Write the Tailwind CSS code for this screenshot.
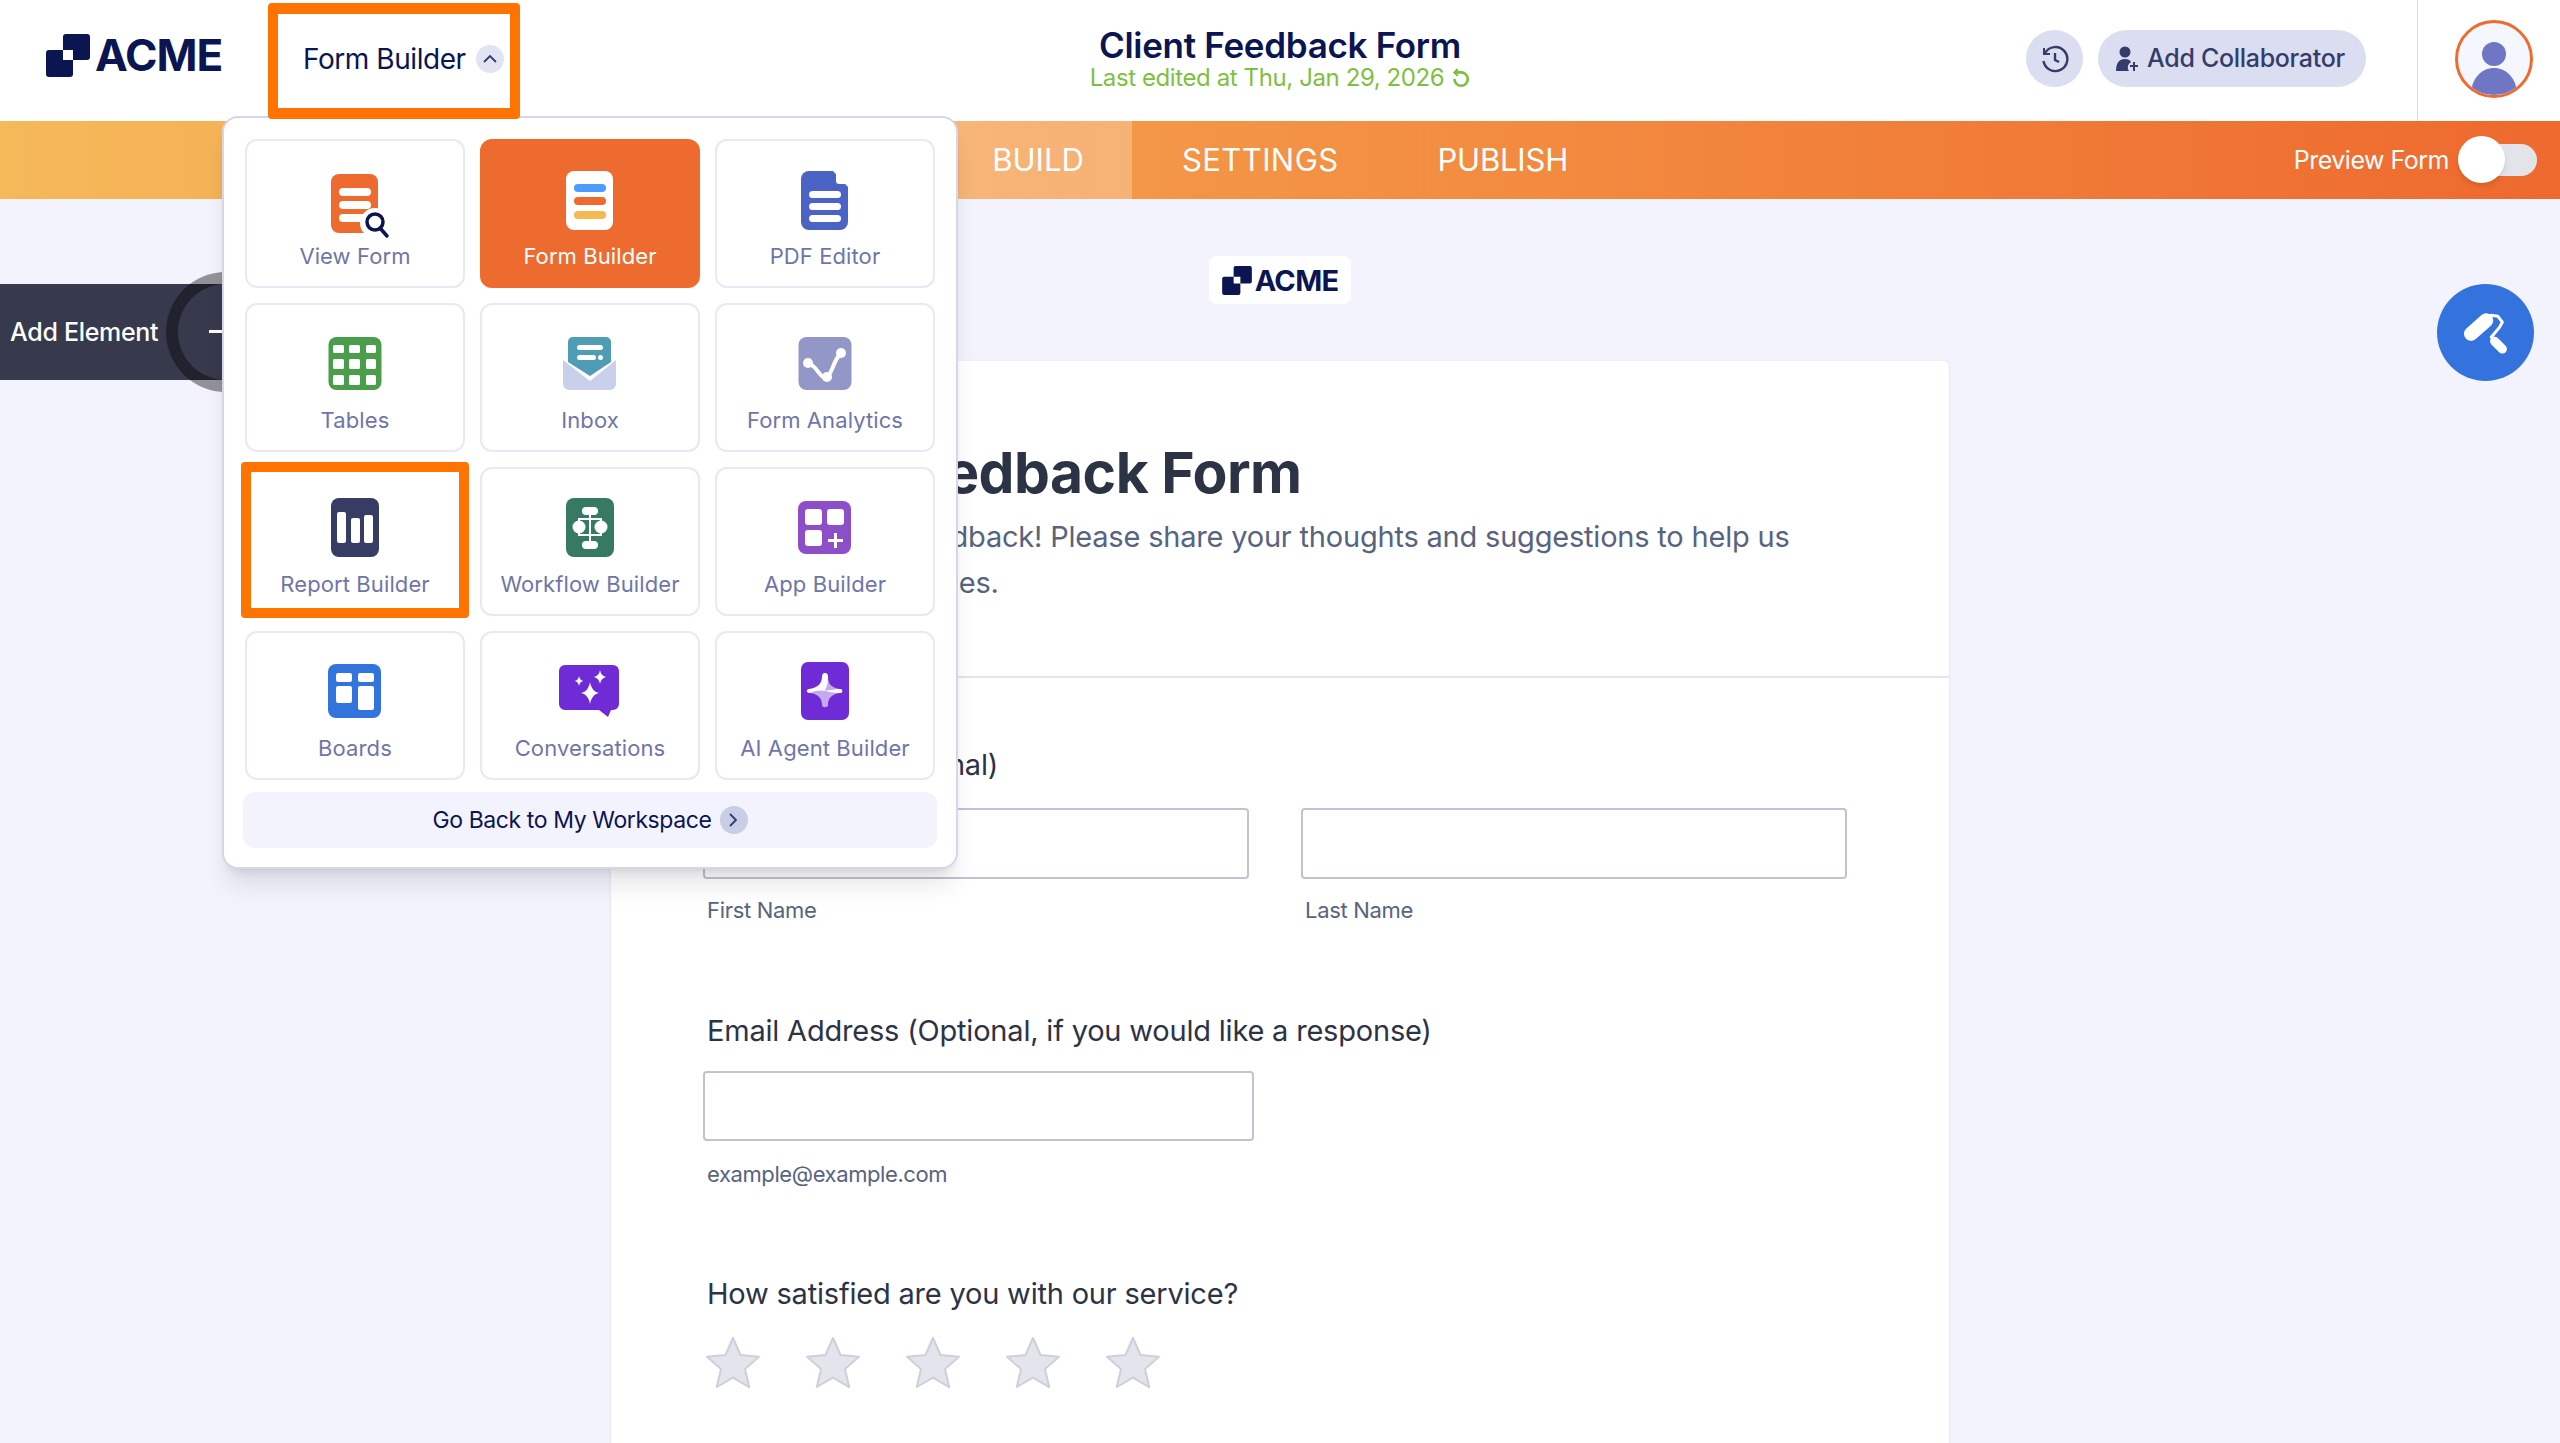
<!DOCTYPE html>
<html lang="en">
<head>
    <meta charset="UTF-8">
    <meta name="viewport" content="width=device-width, initial-scale=1.0">
    <title>Client Feedback Form</title>
    <script src="https://cdn.jsdelivr.net/npm/@tailwindcss/browser@4"></script>
</head>
<body class="relative h-[1443px] overflow-hidden bg-[#F3F3FE] font-['Inter',sans-serif] text-[#0A1551]">

    <!-- Top header -->
    <header class="grid h-[121px] grid-cols-[1fr_auto_1fr] items-center bg-white">
        <div class="flex items-center pl-[46px]">
            <div class="flex w-[222px] items-center gap-[5px] pb-[11px]">
                <svg width="44" height="43" viewBox="0 0 44 43" fill="#0A1551">
                    <path d="M20 0h21a3 3 0 0 1 3 3v20a3 3 0 0 1-3 3H27V16H17V3a3 3 0 0 1 3-3z"/>
                    <path d="M3 16h14v10h10v14a3 3 0 0 1-3 3H3a3 3 0 0 1-3-3V19a3 3 0 0 1 3-3z"/>
                </svg>
                <span class="text-[44px] leading-none font-bold tracking-[-1px]">ACME</span>
            </div>
            <div class="ml-[35px] flex items-center gap-[10px] pb-[4px]">
                <span class="text-[28px] tracking-[-0.45px]">Form Builder</span>
                <span class="flex h-[28px] w-[28px] items-center justify-center rounded-full bg-[#E3E4F3]">
                    <svg width="14" height="9" viewBox="0 0 14 9" fill="none" stroke="#343C6A" stroke-width="1.8"><path d="M1 8l6-6 6 6"/></svg>
                </span>
            </div>
        </div>
        <div class="pb-[5px] text-center">
            <div class="text-[35px] leading-[40px] font-semibold tracking-[-0.3px]">Client Feedback Form</div>
            <div class="flex items-center justify-center gap-[6px] text-[24px] leading-[26px] tracking-[-0.4px] text-[#7FBF3F]">
                Last edited at Thu, Jan 29, 2026
                <svg width="20" height="20" viewBox="0 0 18 18" fill="none" stroke="#7FBF3F" stroke-width="2.4"><path d="M5 4h5a6 6 0 1 1-6 6"/><path d="M7 1L4 4l3 3" stroke-width="2"/></svg>
            </div>
        </div>
        <div class="flex h-full items-center justify-end">
            <span class="mb-[4px] flex h-[57px] w-[57px] items-center justify-center rounded-full bg-[#DBDDF0]">
                <svg width="28" height="28" viewBox="0 0 28 28" fill="none" stroke="#343C6A" stroke-width="2.4"><path d="M4 8a12 12 0 1 1-1.500 8"/><path d="M3 3v6h6" stroke-width="2"/><path d="M14 8v7l4 2"/></svg>
            </span>
            <span class="mb-[4px] ml-[15px] flex h-[57px] w-[268px] items-center gap-[8px] rounded-full bg-[#DBDDF0] pl-[17px]">
                <svg width="24" height="26" viewBox="0 0 24 26" fill="#343C6A"><circle cx="10" cy="6" r="5.500"/><path d="M1 25c0-8 3-12 9-12 3 0 5 1 6 3a6 6 0 0 0-2 9z"/><path d="M18 16h2v3h3v2h-3v4h-2v-4h-3v-2h3z"/></svg>
                <span class="text-[25px] font-medium tracking-[-0.3px] text-[#343C6A]">Add Collaborator</span>
            </span>
            <div class="ml-[51px] h-full w-px bg-[#DADCEC]"></div>
            <div class="mr-[27px] mb-[4px] ml-[37px] h-[78px] w-[78px] overflow-hidden rounded-full border-[3px] border-[#EE6B2F] bg-[#F5F7FE]">
                <svg width="72" height="72" viewBox="0 0 72 72" fill="#6F76C4"><circle cx="36" cy="31" r="12"/><path d="M13 72C13 55 24 45 36 45S59 55 59 72z"/></svg>
            </div>
        </div>
    </header>

    <!-- Orange tab bar -->
    <nav class="flex h-[78px] items-center bg-gradient-to-r from-[#F5B95A] to-[#EE692E] pr-[23px] pl-[950px] text-white">
        <div class="flex h-full w-[182px] items-center justify-center bg-white/25 pr-[6px] text-[31px] tracking-[0px]">BUILD</div>
        <div class="ml-[50px] text-[31px] tracking-[0.4px]">SETTINGS</div>
        <div class="ml-[99px] text-[31px] tracking-[-0.2px]">PUBLISH</div>
        <div class="ml-auto flex items-center gap-[11px]">
            <span class="mt-[1px] text-[25px] tracking-[-0.5px]">Preview Form</span>
            <div class="relative h-[32px] w-[77px] rounded-full bg-[#E3E4EA]">
                <div class="absolute top-[-8px] left-[-2px] h-[47px] w-[47px] rounded-full bg-white shadow-md"></div>
            </div>
        </div>
    </nav>

    <!-- Form canvas -->
    <main class="flex flex-col items-center">
        <div class="mt-[57px] flex h-[48px] w-[142px] items-center justify-center gap-[3px] rounded-lg bg-white">
            <svg width="30" height="29" viewBox="0 0 44 43" fill="#0A1551">
                <path d="M20 0h21a3 3 0 0 1 3 3v20a3 3 0 0 1-3 3H27V16H17V3a3 3 0 0 1 3-3z"/>
                <path d="M3 16h14v10h10v14a3 3 0 0 1-3 3H3a3 3 0 0 1-3-3V19a3 3 0 0 1 3-3z"/>
            </svg>
            <span class="text-[29px] leading-none font-bold tracking-[-0.7px]">ACME</span>
        </div>
        <section class="mt-[57px] h-[1100px] w-[1338px] rounded-t-md bg-white text-[#2C3345] shadow-sm">
            <div class="h-[317px] border-b-2 border-[#E3E4EC] px-[96px] pt-[74px]">
                <h1 class="text-[57px] leading-[76px] font-bold tracking-[-0.5px]">Client Feedback Form</h1>
                <p class="mt-[3px] w-[1100px] text-[29px] leading-[46px] tracking-[-0.2px] text-[#57647E]">We value your feedback! Please share your thoughts and suggestions to help us improve our services.</p>
            </div>
            <div class="px-[92px] pt-[69px]">
                <div class="pl-[4px] text-[29px] leading-[36px] tracking-[-0.2px]">Your Name (Optional)</div>
                <div class="mt-[25px] flex gap-[52px]">
                    <div class="w-[546px]">
                        <div class="h-[71px] rounded border-2 border-[#BFC3D2] bg-white"></div>
                        <div class="mt-[16px] pl-[4px] text-[22px] leading-[30px] tracking-[-0.3px] text-[#57647E]">First Name</div>
                    </div>
                    <div class="w-[546px]">
                        <div class="h-[71px] rounded border-2 border-[#BFC3D2] bg-white"></div>
                        <div class="mt-[16px] pl-[4px] text-[22px] leading-[30px] tracking-[-0.3px] text-[#57647E]">Last Name</div>
                    </div>
                </div>
                <div class="mt-[88px] pl-[4px] text-[29px] leading-[36px] tracking-[-0.2px]">Email Address (Optional, if you would like a response)</div>
                <div class="mt-[22px] h-[70px] w-[551px] rounded border-2 border-[#BFC3D2] bg-white"></div>
                <div class="mt-[18px] pl-[4px] text-[22px] leading-[30px] tracking-[-0.4px] text-[#57647E]">example@example.com</div>
                <div class="mt-[87px] pl-[4px] text-[29px] leading-[36px] tracking-[-0.2px]">How satisfied are you with our service?</div>
                <div class="mt-[24px] flex gap-[46px] pl-[3px]">
                    <svg width="54" height="52" viewBox="0 0 54 52" fill="#E3E4EC" stroke="#CDD0DB" stroke-width="2" stroke-linejoin="round"><path d="M27 2l7.500 17 18.500 1.800-14 12.300 4.200 18L27 41.600 10.800 51 15 33.100 1 20.800 19.500 19z"/></svg>
                    <svg width="54" height="52" viewBox="0 0 54 52" fill="#E3E4EC" stroke="#CDD0DB" stroke-width="2" stroke-linejoin="round"><path d="M27 2l7.500 17 18.500 1.800-14 12.300 4.200 18L27 41.600 10.800 51 15 33.100 1 20.800 19.500 19z"/></svg>
                    <svg width="54" height="52" viewBox="0 0 54 52" fill="#E3E4EC" stroke="#CDD0DB" stroke-width="2" stroke-linejoin="round"><path d="M27 2l7.500 17 18.500 1.800-14 12.300 4.200 18L27 41.600 10.800 51 15 33.100 1 20.800 19.500 19z"/></svg>
                    <svg width="54" height="52" viewBox="0 0 54 52" fill="#E3E4EC" stroke="#CDD0DB" stroke-width="2" stroke-linejoin="round"><path d="M27 2l7.500 17 18.500 1.800-14 12.300 4.200 18L27 41.600 10.800 51 15 33.100 1 20.800 19.500 19z"/></svg>
                    <svg width="54" height="52" viewBox="0 0 54 52" fill="#E3E4EC" stroke="#CDD0DB" stroke-width="2" stroke-linejoin="round"><path d="M27 2l7.500 17 18.500 1.800-14 12.300 4.200 18L27 41.600 10.800 51 15 33.100 1 20.800 19.500 19z"/></svg>
                </div>
            </div>
        </section>
    </main>

    <!-- Add Element drawer -->
    <div class="absolute top-[284px] left-0 flex h-[96px] w-[226px] items-center bg-[#373A4D] pt-[2px] pl-[10px] text-[25px] font-medium tracking-[-0.3px] text-white">Add Element</div>
    <div class="absolute top-[272px] left-[166px] h-[120px] w-[120px] rounded-full border-[12px] border-black/40 bg-[#373A4D] bg-clip-padding">
        <div class="absolute top-[46px] left-[31px] h-[3px] w-[34px] bg-white"></div>
    </div>

    <!-- Designer button -->
    <div class="absolute top-[284px] left-[2437px] h-[97px] w-[97px] rounded-full bg-[#3473DD]">
        <svg width="97" height="97" viewBox="0 0 96 96" fill="none" stroke="#fff" stroke-linecap="round" stroke-linejoin="round"><path d="M33.700 49.300L48.700 36" stroke-width="14"/><path d="M53.700 31L60.300 32L64.700 37.700L62 42.700L53.700 52.700" stroke-width="3"/><path d="M57 56.700L64.700 64.300" stroke-width="9"/></svg>
    </div>

    <!-- Product switcher menu -->
    <div class="absolute top-[116px] left-[222px] h-[753px] w-[736px] rounded-2xl border-2 border-[#D5D7E8] bg-white pt-[21px] pl-[21px] shadow-xl">
        <div class="grid w-[690px] grid-cols-[220px_220px_220px] grid-rows-[149px_149px_149px_149px] gap-[15px]">

            <div class="flex flex-col items-center rounded-xl border-2 border-[#E8E9F5] pt-[28px]">
                <svg width="80" height="70" viewBox="0 0 80 70"><rect x="16" y="5" width="47" height="59" rx="8" fill="#EE6B2F"/><rect x="24" y="19" width="32" height="8" rx="4" fill="#fff"/><rect x="24" y="32" width="32" height="8" rx="4" fill="#fff"/><rect x="24" y="45" width="32" height="8" rx="4" fill="#fff"/><circle cx="60" cy="54" r="15" fill="#fff"/><circle cx="60" cy="53" r="8" fill="none" stroke="#0A1551" stroke-width="3.500"/><path d="M65 59l7 8" stroke="#0A1551" stroke-width="3.500" stroke-linecap="round"/></svg>
                <span class="mt-[2px] text-[22px] leading-[30px] tracking-[0.1px] text-[#6F76A7]">View Form</span>
            </div>

            <div class="flex flex-col items-center rounded-xl border-2 border-[#EE6B2F] bg-[#EE6B2F] pt-[28px]">
                <svg width="80" height="70" viewBox="0 0 80 70"><rect x="16" y="2" width="47" height="59" rx="8" fill="#fff"/><rect x="24" y="15" width="32" height="8" rx="4" fill="#4C9BFF"/><rect x="24" y="28" width="32" height="8" rx="4" fill="#EE6B2F"/><rect x="24" y="42" width="32" height="8" rx="4" fill="#F5B952"/></svg>
                <span class="mt-[2px] text-[22px] leading-[30px] tracking-[0.1px] text-white">Form Builder</span>
            </div>

            <div class="flex flex-col items-center rounded-xl border-2 border-[#E8E9F5] pt-[28px]">
                <svg width="80" height="70" viewBox="0 0 80 70"><path d="M24 2h24l15 16v35a8 8 0 0 1-8 8H24a8 8 0 0 1-8-8V10a8 8 0 0 1 8-8z" fill="#4A63C5"/><path d="M51 3l11 12h-8a3 3 0 0 1-3-3z" fill="#fff"/><rect x="24" y="22" width="32" height="7" rx="3.500" fill="#fff"/><rect x="24" y="34" width="32" height="7" rx="3.500" fill="#fff"/><rect x="24" y="46" width="32" height="7" rx="3.500" fill="#fff"/></svg>
                <span class="mt-[2px] text-[22px] leading-[30px] tracking-[0.1px] text-[#6F76A7]">PDF Editor</span>
            </div>

            <div class="flex flex-col items-center rounded-xl border-2 border-[#E8E9F5] pt-[28px]">
                <svg width="80" height="70" viewBox="0 0 80 70"><rect x="13.500" y="4" width="53" height="53" rx="8" fill="#4A9E4B"/><g fill="#fff"><rect x="18" y="12" width="11" height="8" rx="1.500"/><rect x="34" y="12" width="11" height="8" rx="1.500"/><rect x="51" y="12" width="10" height="8" rx="1.500"/><rect x="18" y="26" width="11" height="10" rx="1.500"/><rect x="34" y="26" width="11" height="10" rx="1.500"/><rect x="51" y="26" width="10" height="10" rx="1.500"/><rect x="18" y="42" width="11" height="10" rx="1.500"/><rect x="34" y="42" width="11" height="10" rx="1.500"/><rect x="51" y="42" width="10" height="10" rx="1.500"/></g></svg>
                <span class="mt-[2px] text-[22px] leading-[30px] tracking-[0.1px] text-[#6F76A7]">Tables</span>
            </div>

            <div class="flex flex-col items-center rounded-xl border-2 border-[#E8E9F5] pt-[28px]">
                <svg width="80" height="70" viewBox="0 0 80 70"><path d="M13 27l27 21 26-21v24a6 6 0 0 1-6 6H19a6 6 0 0 1-6-6z" fill="#C9D0EC"/><path d="M24 4h32a5 5 0 0 1 5 5v20L40 43 18 29V9a5 5 0 0 1 6-5z" fill="#4E9DB5"/><rect x="27" y="12" width="26" height="5" rx="2.500" fill="#fff"/><rect x="27" y="22" width="19" height="5" rx="2.500" fill="#fff"/><circle cx="50.500" cy="24.500" r="2.500" fill="#fff"/></svg>
                <span class="mt-[2px] text-[22px] leading-[30px] tracking-[0.1px] text-[#6F76A7]">Inbox</span>
            </div>

            <div class="flex flex-col items-center rounded-xl border-2 border-[#E8E9F5] pt-[28px]">
                <svg width="80" height="70" viewBox="0 0 80 70"><rect x="13.500" y="4" width="53" height="53" rx="8" fill="#9297C8"/><path d="M23 30l5 3c5 4 9 14 14 11 5-3 6-16 14-24" fill="none" stroke="#fff" stroke-width="4"/><circle cx="23" cy="30" r="5" fill="#fff"/><circle cx="42" cy="44" r="5" fill="#fff"/><circle cx="56" cy="20" r="5" fill="#fff"/></svg>
                <span class="mt-[2px] text-[22px] leading-[30px] tracking-[0.1px] text-[#6F76A7]">Form Analytics</span>
            </div>

            <div class="flex flex-col items-center rounded-xl border-2 border-white pt-[28px]">
                <svg width="80" height="70" viewBox="0 0 80 70"><rect x="16" y="1" width="48" height="59" rx="8" fill="#363C63"/><rect x="22" y="15" width="9" height="31" rx="2" fill="#fff"/><rect x="36" y="21" width="9" height="25" rx="2" fill="#fff"/><rect x="49" y="18" width="9" height="28" rx="2" fill="#fff"/></svg>
                <span class="mt-[2px] text-[22px] leading-[30px] tracking-[0.1px] text-[#6F76A7]">Report Builder</span>
            </div>

            <div class="flex flex-col items-center rounded-xl border-2 border-[#E8E9F5] pt-[28px]">
                <svg width="80" height="70" viewBox="0 0 80 70"><rect x="16" y="1" width="48" height="59" rx="8" fill="#367A64"/><path d="M40 14v36M29 22h22v16H29z" fill="none" stroke="#fff" stroke-width="2"/><rect x="32" y="10" width="16" height="8" rx="4" fill="#fff"/><rect x="32" y="44" width="16" height="8" rx="4" fill="#fff"/><circle cx="29" cy="30" r="6.500" fill="#fff"/><circle cx="51" cy="30" r="6.500" fill="#fff"/></svg>
                <span class="mt-[2px] text-[22px] leading-[30px] tracking-[0.1px] text-[#6F76A7]">Workflow Builder</span>
            </div>

            <div class="flex flex-col items-center rounded-xl border-2 border-[#E8E9F5] pt-[28px]">
                <svg width="80" height="70" viewBox="0 0 80 70"><rect x="13" y="4" width="53" height="53" rx="8" fill="#8D4FC8"/><rect x="20" y="12" width="17" height="16" rx="3" fill="#fff"/><rect x="42" y="12" width="17" height="16" rx="3" fill="#fff"/><rect x="20" y="33" width="17" height="16" rx="3" fill="#fff"/><path d="M49 36h3v6h6v3h-6v6h-3v-6h-6v-3h6z" fill="#fff"/></svg>
                <span class="mt-[2px] text-[22px] leading-[30px] tracking-[0.1px] text-[#6F76A7]">App Builder</span>
            </div>

            <div class="flex flex-col items-center rounded-xl border-2 border-[#E8E9F5] pt-[28px]">
                <svg width="80" height="70" viewBox="0 0 80 70"><rect x="13" y="3" width="53" height="54" rx="8" fill="#3273DD"/><rect x="21" y="12" width="16" height="9" rx="2" fill="#fff"/><rect x="43" y="12" width="16" height="9" rx="2" fill="#fff"/><rect x="21" y="25" width="16" height="17" rx="2" fill="#fff"/><rect x="43" y="25" width="16" height="24" rx="2" fill="#fff"/></svg>
                <span class="mt-[2px] text-[22px] leading-[30px] tracking-[0.1px] text-[#6F76A7]">Boards</span>
            </div>

            <div class="flex flex-col items-center rounded-xl border-2 border-[#E8E9F5] pt-[28px]">
                <svg width="80" height="70" viewBox="0 0 80 70"><path d="M15 4h48a6 6 0 0 1 6 6v33a6 6 0 0 1-6 6h-2l-3 7-9-7H15a6 6 0 0 1-6-6V10a6 6 0 0 1 6-6z" fill="#6F2BD6"/><g fill="#fff"><path d="M40 21c1 6 4 10 9 11-5 1-8 5-9 11-1-6-4-10-9-11 5-1 8-5 9-11z"/><path d="M29 15c.5 3 2 4.500 4.500 5-2.500.5-4 2-4.500 5-.5-3-2-4.500-4.500-5 2.500-.5 4-2 4.500-5z"/><path d="M50 9c.7 4 2.500 6 6 7-3.500 1-5.300 3-6 7-.7-4-2.500-6-6-7 3.500-1 5.300-3 6-7z"/></g></svg>
                <span class="mt-[2px] text-[22px] leading-[30px] tracking-[0.1px] text-[#6F76A7]">Conversations</span>
            </div>

            <div class="flex flex-col items-center rounded-xl border-2 border-[#E8E9F5] pt-[28px]">
                <svg width="80" height="70" viewBox="0 0 80 70"><rect x="16" y="1" width="48" height="58" rx="7" fill="#6F2BD6"/><path d="M40 12c2 0 3 2 3 4 0 6 3 11 12 12 3 0 3 4 0 4-9 1-12 6-12 12 0 3-6 3-6 0 0-6-3-11-12-12-3 0-3-4 0-4 9-1 12-6 12-12 0-2 1-4 3-4z" fill="#C4A8F0"/><path d="M40 12c2 0 3 2 3 4 0 5-1 9-3 14-4-1-9-1-15 2-4 0-4-4-1-4 9-1 13-6 13-12 0-2 1-4 3-4z M55 28c3 0 3 4 0 4-5 0-11-1-15-2 5-1 10-2 15-2z" fill="#fff"/></svg>
                <span class="mt-[2px] text-[22px] leading-[30px] tracking-[0.1px] text-[#6F76A7]">AI Agent Builder</span>
            </div>
        </div>
        <div class="mt-[12px] ml-[-2px] flex h-[56px] w-[694px] items-center justify-center gap-[8px] rounded-xl bg-[#F3F3FE]">
            <span class="text-[23px] tracking-[-0.4px]">Go Back to My Workspace</span>
            <span class="flex h-[28px] w-[28px] items-center justify-center rounded-full bg-[#C8CDE8]">
                <svg width="9" height="14" viewBox="0 0 9 14" fill="none" stroke="#343C6A" stroke-width="1.800"><path d="M1 1l6 6-6 6"/></svg>
            </span>
        </div>
    </div>

    <!-- Annotation highlights -->
    <div class="absolute top-[3px] left-[268px] h-[116px] w-[252px] rounded border-x-[10px] border-y-[11px] border-[#FF7300]"></div>
    <div class="absolute top-[462px] left-[241px] h-[156px] w-[228px] rounded border-[10px] border-[#FF7300]"></div>

</body>
</html>
